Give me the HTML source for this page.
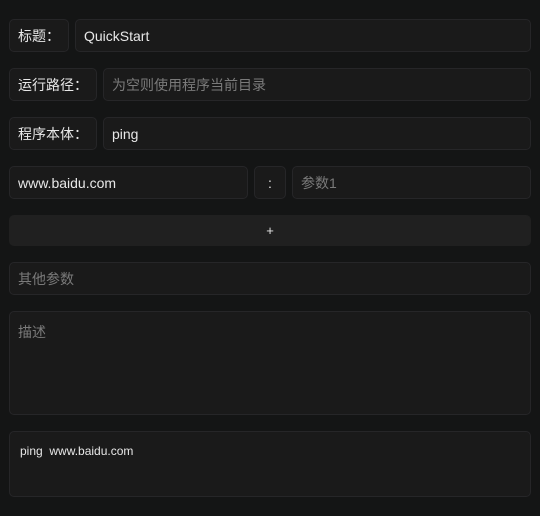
<!DOCTYPE html>
<html><head><meta charset="utf-8"><style>
html,body{margin:0;width:540px;height:516px;background:#141515;overflow:hidden;font-family:"Liberation Sans","Noto Sans CJK SC",sans-serif;font-size:14px;color:#e8e8e8}
.b{position:absolute;box-sizing:border-box;background:#1a1a1a;border:1px solid #262628;border-radius:5px;display:flex;align-items:center;padding-left:8px}
.ph{color:#7a7a7a}
</style></head><body>
<div class="b" style="left:9px;top:19px;width:60px;height:33px">标题：</div>
<div class="b" style="left:75px;top:19px;width:456px;height:33px">QuickStart</div>
<div class="b" style="left:9px;top:68px;width:88px;height:33px">运行路径：</div>
<div class="b ph" style="left:103px;top:68px;width:428px;height:33px">为空则使用程序当前目录</div>
<div class="b" style="left:9px;top:117px;width:88px;height:33px">程序本体：</div>
<div class="b" style="left:103px;top:117px;width:428px;height:33px">ping</div>
<div class="b" style="left:9px;top:166px;width:239px;height:33px">www.baidu.com</div>
<div class="b" style="left:254px;top:166px;width:32px;height:33px;justify-content:center;padding:0">:</div>
<div class="b ph" style="left:292px;top:166px;width:239px;height:33px">参数1</div>
<div class="b" style="left:9px;top:215px;width:522px;height:31px;background:#202020;border-color:#202020;justify-content:center;padding:0;font-size:13px">+</div>
<div class="b ph" style="left:9px;top:262px;width:522px;height:33px">其他参数</div>
<div class="b ph" style="left:9px;top:311px;width:522px;height:104px;align-items:flex-start;padding-top:10px">描述</div>
<div class="b" style="left:9px;top:431px;width:522px;height:66px;align-items:flex-start;padding-top:12px;padding-left:10px;font-size:12px;white-space:pre">ping  www.baidu.com</div>
</body></html>
